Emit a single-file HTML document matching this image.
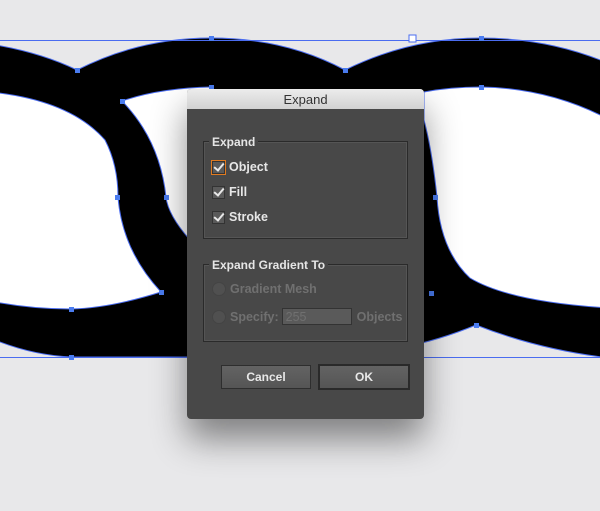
<!DOCTYPE html><html><head><style>
body{margin:0;width:600px;height:511px;background:#e8e8ea;position:relative;overflow:hidden;font-family:"Liberation Sans",sans-serif}
svg{position:absolute;left:0;top:0}
.dlg{position:absolute;left:187px;top:89px;width:237px;height:330px;background:#484848;border-radius:4px;box-shadow:0 20px 35px rgba(0,0,0,.45);overflow:hidden}
.tb{height:20px;background:linear-gradient(#ececec,#d2d2d2);text-align:center;font-size:13px;line-height:21px;color:#333}
.grp{position:absolute;border:1px solid #2a2a2a;box-shadow:inset 0 0 0 1px #555;}
.lbl{position:absolute;background:#484848;color:#e6e6e6;font-size:12px;font-weight:bold;padding:0 3px}
.row{position:absolute;left:25px;font-size:12.5px;font-weight:bold;color:#e6e6e6;display:flex;align-items:center}
.cb{width:11px;height:11px;background:#5a5a5a;border:1px solid #333;margin-right:4px;position:relative}
.cb:after{content:"";position:absolute;left:3px;top:-1px;width:4px;height:8px;border:solid #e8e8e8;border-width:0 2px 2px 0;transform:rotate(40deg)}
.rd{width:12px;height:12px;border-radius:50%;background:#505050;border:1px solid #444;margin-right:4px}
.dis{color:#707070}
.btn{position:absolute;top:276px;height:22px;background:linear-gradient(#636363,#555);border:1px solid #2e2e2e;color:#e8e8e8;font-size:12px;font-weight:bold;text-align:center;line-height:22px}
</style></head><body>
<svg width="600" height="511">
<path d="M-10,44 Q40,52 77,70 Q140,38 211,38 Q285,38 345,70 Q410,38 480,38 Q550,38 610,64 L610,358 Q540,350 476,325 Q440,340 400,348 L200,357 Q130,357 71,357 Q30,355 -10,338 Z" fill="#000" stroke="#4a6cf0" stroke-width="1"/>
<path d="M-10,92 Q70,100 105,140 Q118,165 118,197 Q122,250 161,292 Q110,308 71,309 Q30,309 -10,301 Z" fill="#fff" stroke="#4a6cf0" stroke-width="1"/>
<path d="M122,101 Q160,88 211,87 L211,240 L190,240 Q168,215 166,197 Q160,140 122,101 Z" fill="#fff" stroke="#4a6cf0" stroke-width="1"/>
<path d="M481,87 Q550,88 610,120 L610,308 Q510,302 470,278 Q440,250 437,197 Q432,150 424,120 L424,92 Q450,87 481,87 Z" fill="#fff" stroke="#4a6cf0" stroke-width="1"/>
<g fill="none" stroke="#4a6cf0" stroke-width="1">
<line x1="0" y1="40.5" x2="600" y2="40.5"/>
<line x1="0" y1="357.5" x2="600" y2="357.5"/>
</g>
<g fill="#4a7cf0">
<rect x="75" y="68" width="5" height="5"/><rect x="209" y="36" width="5" height="5"/><rect x="343" y="68" width="5" height="5"/><rect x="479" y="36" width="5" height="5"/>
<rect x="120" y="99" width="5" height="5"/><rect x="209" y="85" width="5" height="5"/><rect x="479" y="85" width="5" height="5"/>
<rect x="115" y="195" width="5" height="5"/><rect x="164" y="195" width="5" height="5"/><rect x="433" y="195" width="5" height="5"/>
<rect x="159" y="290" width="5" height="5"/><rect x="69" y="307" width="5" height="5"/><rect x="69" y="355" width="5" height="5"/><rect x="429" y="291" width="5" height="5"/><rect x="474" y="323" width="5" height="5"/>
</g>
<rect x="409" y="35" width="7" height="7" fill="#fff" stroke="#4a6cf0"/>
</svg>
<div class="dlg">
<div class="tb">Expand</div>
<div class="grp" style="left:16px;top:52px;width:203px;height:96px"></div>
<div class="lbl" style="left:22px;top:46px">Expand</div>
<div class="row" style="top:71px"><div class="cb" style="outline:1px solid #e07a20"></div>Object</div>
<div class="row" style="top:96px"><div class="cb"></div>Fill</div>
<div class="row" style="top:121px"><div class="cb"></div>Stroke</div>
<div class="grp" style="left:16px;top:175px;width:203px;height:76px"></div>
<div class="lbl" style="left:22px;top:169px">Expand Gradient To</div>
<div class="row dis" style="top:193px"><div class="rd"></div>Gradient Mesh</div>
<div class="row dis" style="top:219px"><div class="rd"></div>Specify:<span style="display:inline-block;width:70px;height:17px;background:#5a5a5a;border:1px solid #333;margin:0 5px 0 3px;font-weight:normal;line-height:17px;padding-left:3px;box-sizing:border-box">255</span>Objects</div>
<div class="btn" style="left:34px;width:88px">Cancel</div>
<div class="btn" style="left:131px;width:88px;border:2px solid #2a2a2a;top:275px">OK</div>
</div>
</body></html>
